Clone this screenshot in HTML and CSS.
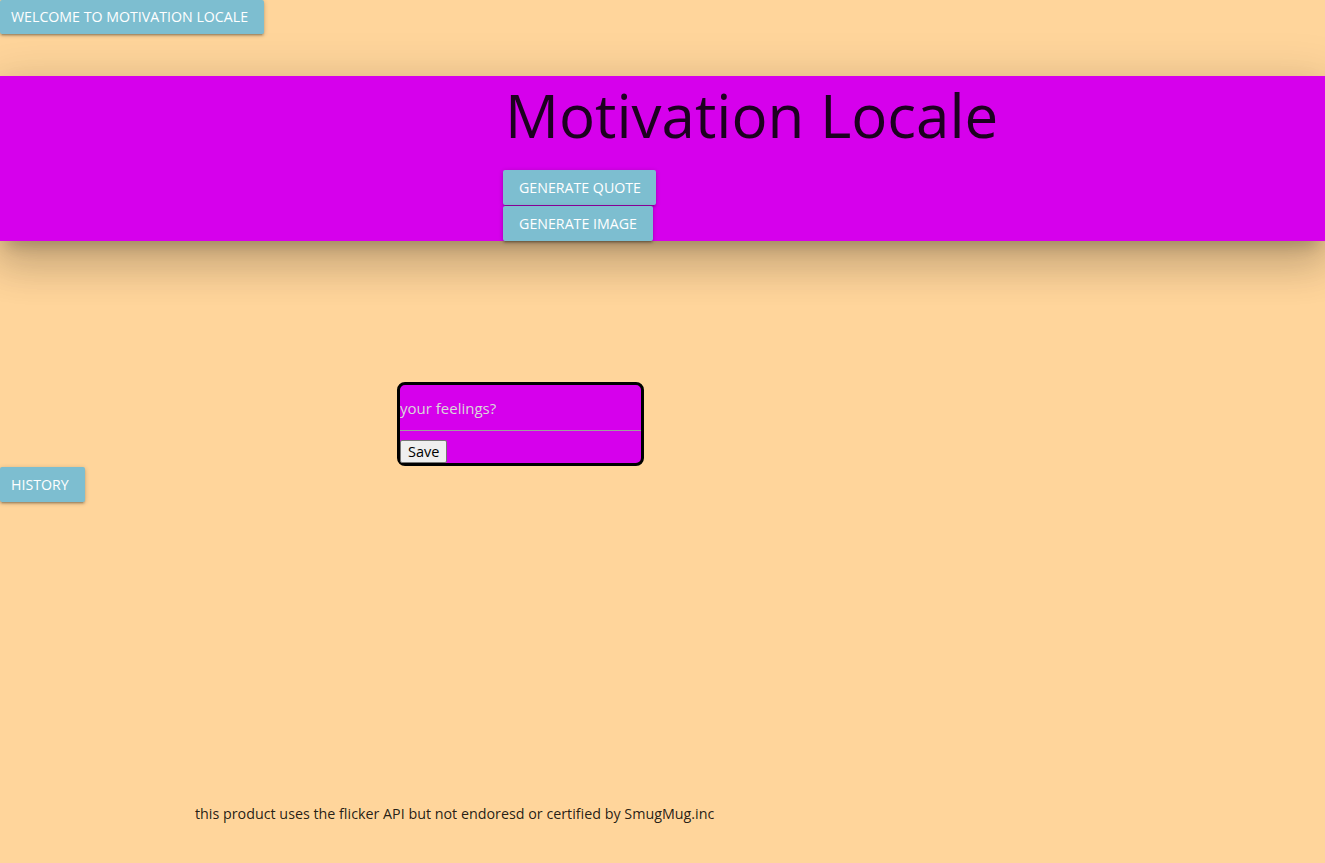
FILE: index.html
```html
<!DOCTYPE html>
<html>
<head>
<meta charset="utf-8">
<link rel="stylesheet" href="styles.css">
</head>
<body>
<div class="page">
  <div class="topbar"><button class="btn welcome">Welcome to Motivation Locale</button></div>
  <header class="hero">
    <div class="hero-inner">
      <h1 class="title">Motivation Locale</h1>
      <div class="actions">
        <button class="btn gen-quote">Generate Quote</button>
        <button class="btn gen-image">Generate Image</button>
      </div>
    </div>
  </header>
  <main class="main">
    <form class="feel-box">
      <input class="feel-input" type="text" placeholder="your feelings?">
      <button type="button" class="save">Save</button>
    </form>
    <button class="btn history">History</button>
  </main>
  <footer class="foot">this product uses the flicker API but not endoresd or certified by SmugMug.inc</footer>
</div>
</body>
</html>
```

FILE: styles.css
```css
html, body {
  margin: 0;
  padding: 0;
  background: #ffd59b;
}
body {
  font-family: "Open Sans", "Noto Sans", sans-serif;
  color: rgba(0,0,0,0.87);
}
.page {
  width: 1325px;
  height: 863px;
  overflow: hidden;
  display: flex;
  flex-direction: column;
}
.btn {
  display: block;
  border: none;
  margin: 0;
  background: #7dbed0;
  color: #fff;
  font-family: "Open Sans", "Noto Sans", sans-serif;
  font-size: 14.2px;
  text-transform: uppercase;
  height: 35px;
  line-height: 35px;
  padding: 0 16px;
  border-radius: 2px;
  box-shadow: 0 2px 2px 0 rgba(0,0,0,.14), 0 3px 1px -2px rgba(0,0,0,.12), 0 1px 5px 0 rgba(0,0,0,.2);
  cursor: pointer;
  white-space: nowrap;
}
.topbar {
  height: 76px;
}
.welcome {
  height: 34px;
  line-height: 34px;
  padding: 0 11px;
  width: 264px;
  text-align: left;
}
.hero {
  background: #d600ec;
  height: 165px;
  box-shadow: 0 24px 38px 3px rgba(0,0,0,.14), 0 9px 46px 8px rgba(0,0,0,.12), 0 11px 15px -7px rgba(0,0,0,.2);
  position: relative;
  z-index: 1;
}
.hero-inner {
  padding-left: 503px;
}
.title {
  margin: 0;
  height: 94px;
  font-weight: 400;
  font-size: 60px;
  line-height: 78px;
  padding-left: 2px;
  color: rgba(0,0,0,0.87);
}
.actions {
  display: flex;
  flex-direction: column;
  align-items: flex-start;
  gap: 1px;
}
.gen-quote { width: 153px; }
.gen-image { width: 150px; }
.main {
  height: 560px;
  padding-top: 141px;
  box-sizing: border-box;
}
.feel-box {
  margin: 0 0 0 397px;
  width: 247px;
  height: 84px;
  box-sizing: border-box;
  border: 3px solid #000;
  border-radius: 8px;
  background: #d600ec;
  display: flex;
  flex-direction: column;
  align-items: flex-start;
}
.feel-input {
  width: 100%;
  box-sizing: border-box;
  height: 46px;
  margin: 0 0 9px 0;
  padding: 0;
  border: none;
  border-bottom: 1px solid #9e9e9e;
  background: transparent;
  font-family: "Open Sans", "Noto Sans", sans-serif;
  font-size: 15px;
  outline: none;
}
.feel-input::placeholder {
  color: #d8d8d8;
}
.save {
  margin: 0;
  padding: 0 7px;
  height: 23px;
  font-family: "Open Sans", "Noto Sans", sans-serif;
  font-size: 14.5px;
  color: #000;
  background: #efefef;
  border: 1px solid #767676;
  border-radius: 2px;
}
.history {
  margin-top: 1px;
  width: 85px;
  padding: 0 11px;
  text-align: left;
}
.foot {
  padding-left: 195px;
  font-size: 14.3px;
  padding-top: 3px;
}
```
